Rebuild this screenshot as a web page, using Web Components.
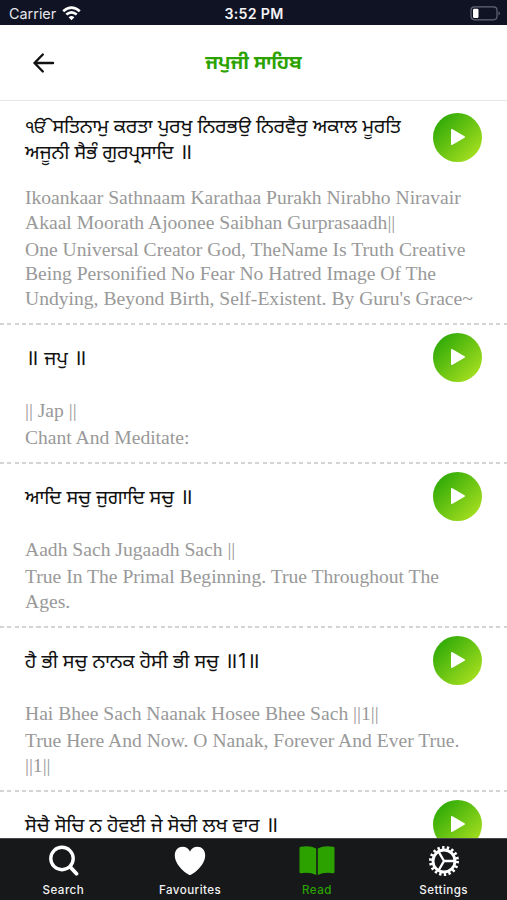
<!DOCTYPE html>
<html lang="pa">
<head>
<meta charset="utf-8">
<title>ਜਪੁਜੀ ਸਾਹਿਬ</title>
<style>
  html, body {
    margin: 0;
    height: 100%;
    overflow: hidden;
    background: #fff;
  }
</style>
</head>
<body>
<read-screen></read-screen>
<script>
const icons = {
  search: `<svg width="32" height="32" viewBox="0 0 32 32" fill="none" stroke="#fff"><circle cx="15" cy="13.500" r="11.200" stroke-width="3.400"/><path d="M23.500 22.200l6 6.500" stroke-width="3.800" stroke-linecap="round"/></svg>`,
  heart: `<svg width="32" height="32" viewBox="0 0 32 32"><path fill="#fff" d="M16 30C13.500 30 .8 20.500 .8 10.500C.8 5 4.300 1.800 8.600 1.800C12 1.800 14.500 3.600 16 6.400C17.500 3.600 20 1.800 23.400 1.800C27.700 1.800 31.200 5 31.200 10.500C31.200 20.500 18.500 30 16 30Z"/></svg>`,
  book: `<svg width="36" height="32" viewBox="0 0 36 32"><path fill="#2ba200" d="M.5 3.200Q.5 2 1.700 1.800Q11 .2 17.200 3.500V30Q10.500 26.600 2 28.200Q.5 28.400 .5 27ZM18.800 3.500Q25 .2 34.300 1.800Q35.500 2 35.500 3.200V27Q35.500 28.400 34 28.200Q25.500 26.600 18.800 30Z"/></svg>`,
  gear: `<svg width="32" height="32" viewBox="0 0 32 32" fill="none" stroke="#fff"><circle cx="16" cy="16" r="13.400" stroke-width="3.200" stroke-dasharray="2.400 2.278"/><circle cx="16" cy="16" r="11" stroke-width="2.800"/><path d="M16 16H27M16 16L10.500 6.500M16 16L10.500 25.500" stroke-width="2.400"/></svg>`
}

class StatusBar extends HTMLElement {
  constructor() {
    super()
    this._shadowRoot = this.attachShadow({mode: 'open'})
  }
  connectedCallback() {
    this._shadowRoot.innerHTML = `
      <style>
        :host {
          display: grid;
          grid-template-columns: 1fr auto 1fr;
          align-items: center;
          height: 25px;
          padding: 2px 6px 0 9px;
          box-sizing: border-box;
          background: #101324;
          color: #e4e5ea;
          font: 14.4px/20px Inter, sans-serif;
        }
        .left { display: flex; align-items: center; gap: 6px; }
        .time { font-weight: 600; color: #f4f4f7; font-size: 14.2px; letter-spacing: .3px; margin-right: 2px; }
        .battery { justify-self: end; }
        svg { display: block; }
      </style>
      <div class="left">
        <span>Carrier</span>
        <svg width="19" height="15" viewBox="0 0 19 15" fill="none" stroke="#fff" stroke-width="2.600"><path d="M1.200 5.300Q9.500-2 17.800 5.300M4.300 8.600Q9.500 4.200 14.700 8.600"/><path d="M9.500 14.200L6.600 11.200Q9.500 8.800 12.400 11.200Z" fill="#fff" stroke="none"/></svg>
      </div>
      <span class="time">3:52 PM</span>
      <svg class="battery" width="31" height="15" viewBox="0 0 31 15"><rect x="1" y=".8" width="26" height="13" rx="3.500" fill="none" stroke="#656775" stroke-width="1.200"/><rect x="3" y="2.700" width="5.500" height="9.300" rx="1.200" fill="#fff"/><path d="M28.500 5.200Q31.300 7.300 28.500 9.500Z" fill="#656775"/></svg>
    `
  }
}
window.customElements.define('status-bar', StatusBar)

class ScreenHeader extends HTMLElement {
  constructor() {
    super()
    this._shadowRoot = this.attachShadow({mode: 'open'})
  }
  connectedCallback() {
    this._shadowRoot.innerHTML = `
      <style>
        :host {
          display: grid;
          grid-template-columns: 1fr auto 1fr;
          align-items: center;
          height: 76px;
          padding: 0 32px;
          box-sizing: border-box;
          border-bottom: 1px solid #e6e6e6;
          font: 700 19.4px/26px "Noto Sans Gurmukhi", "Noto Sans", sans-serif;
          color: #2ba200;
        }
        svg { display: block; }
        .title { padding-top: 4px; }
      </style>
      <svg width="23" height="22" viewBox="0 0 23 22" fill="none" stroke="#111" stroke-width="2.400" stroke-linecap="round" stroke-linejoin="round"><path d="M21 11H2.500M10.800 2.500L2.500 11L10.800 19.500"/></svg>
      <div class="title"><slot></slot></div>
    `
  }
}
window.customElements.define('screen-header', ScreenHeader)

class PlayButton extends HTMLElement {
  constructor() {
    super()
    this._shadowRoot = this.attachShadow({mode: 'open'})
  }
  connectedCallback() {
    this._shadowRoot.innerHTML = `
      <style>
        :host {
          display: flex;
          align-items: center;
          justify-content: center;
          width: 49px;
          height: 49px;
          border-radius: 50%;
          background: linear-gradient(135deg, #34ac08 15%, #a8e020 90%);
        }
      </style>
      <svg width="16" height="18" viewBox="0 0 16 18"><path d="M2 2L14 9L2 16Z" fill="#fff" stroke="#fff" stroke-width="2" stroke-linejoin="round"/></svg>
    `
  }
}
window.customElements.define('play-button', PlayButton)

class VerseRow extends HTMLElement {
  constructor() {
    super()
    this._shadowRoot = this.attachShadow({mode: 'open'})
  }
  connectedCallback() {
    this._shadowRoot.innerHTML = `
      <style>
        :host {
          display: block;
          height: var(--row-height);
          padding: 9.5px 25px 0;
          box-sizing: border-box;
        }
        .top {
          display: flex;
          justify-content: space-between;
          height: var(--top-height, 49px);
        }
        .gurmukhi {
          padding-top: var(--text-top, 15px);
          font: 19.6px/24.5px "Noto Sans Gurmukhi", "Noto Sans", sans-serif;
          color: #111;
          white-space: nowrap;
        }
        .latin {
          margin-top: 17.5px;
          font: 19.6px/24.5px "Liberation Serif", serif;
          color: #999;
          white-space: nowrap;
        }
        .meaning { margin-top: 2.500px; }
      </style>
      <div class="top">
        <div class="gurmukhi"><slot name="gurmukhi"></slot></div>
        <play-button></play-button>
      </div>
      <div class="latin">
        <slot name="latin"></slot>
        <div class="meaning"><slot name="meaning"></slot></div>
      </div>
    `
  }
}
window.customElements.define('verse-row', VerseRow)

class TabItem extends HTMLElement {
  constructor() {
    super()
    this._shadowRoot = this.attachShadow({mode: 'open'})
  }
  connectedCallback() {
    this._shadowRoot.innerHTML = `
      <style>
        :host {
          flex: 1;
          display: flex;
          flex-direction: column;
          align-items: center;
          padding-top: 6px;
          gap: 5px;
          color: #f2f2f2;
          font: 500 11.6px/16px Inter, sans-serif;
          letter-spacing: .45px;
        }
        :host([active]) { color: #2ba200; }
        svg { display: block; }
      </style>
      ${icons[this.getAttribute('icon')]}
      <span><slot></slot></span>
    `
  }
}
window.customElements.define('tab-item', TabItem)

class TabBar extends HTMLElement {
  constructor() {
    super()
    this._shadowRoot = this.attachShadow({mode: 'open'})
  }
  connectedCallback() {
    this._shadowRoot.innerHTML = `
      <style>
        :host {
          display: flex;
          height: 62px;
          box-sizing: border-box;
          border-top: 1px solid #46474a;
          background: #17181a;
        }
      </style>
      <slot></slot>
    `
  }
}
window.customElements.define('tab-bar', TabBar)

class ReadScreen extends HTMLElement {
  constructor() {
    super()
    this._shadowRoot = this.attachShadow({mode: 'open'})
  }
  connectedCallback() {
    this._shadowRoot.innerHTML = `
      <style>
        :host {
          display: flex;
          flex-direction: column;
          width: 507px;
          height: 900px;
          overflow: hidden;
        }
        main { flex: 1; min-height: 0; overflow: hidden; }
        verse-row { --row-height: 139px; }
        verse-row.first {
          --row-height: 222px;
          --text-top: 3.5px;
          --top-height: 56px;
          padding-top: 11.5px;
        }
        verse-row.tall { --row-height: 164px; }
        verse-row + verse-row {
          background: repeating-linear-gradient(90deg, #d4d4d4 0 4px, transparent 4px 7.300px) 0 0 / 100% 2px no-repeat;
        }
        i, u { font-style: normal; text-decoration: none; line-height: 0; }
        i { font-size: 22px; margin: 0 .5px; }
        b { font-weight: 400; font-size: 18px; word-spacing: -4px; }
        u { font-family: Inter, sans-serif; }
      </style>
      <status-bar></status-bar>
      <screen-header>ਜਪੁਜੀ ਸਾਹਿਬ</screen-header>
      <main>
        <verse-row class="first">
          <span slot="gurmukhi"><b>ੴ </b>ਸਤਿਨਾਮੁ ਕਰਤਾ ਪੁਰਖੁ ਨਿਰਭਉ ਨਿਰਵੈਰੁ ਅਕਾਲ ਮੂਰਤਿ<br>ਅਜੂਨੀ ਸੈਭੰ ਗੁਰਪ੍ਰਸਾਦਿ <i>॥</i></span>
          <span slot="latin">Ikoankaar Sathnaam Karathaa Purakh Nirabho Niravair<br>Akaal Moorath Ajoonee Saibhan Gurprasaadh||</span>
          <span slot="meaning">One Universal Creator God, TheName Is Truth Creative<br>Being Personified No Fear No Hatred Image Of The<br>Undying, Beyond Birth, Self-Existent. By Guru's Grace~</span>
        </verse-row>
        <verse-row>
          <span slot="gurmukhi"><i>॥</i> ਜਪੁ <i>॥</i></span>
          <span slot="latin">|| Jap ||</span>
          <span slot="meaning">Chant And Meditate:</span>
        </verse-row>
        <verse-row class="tall">
          <span slot="gurmukhi">ਆਦਿ ਸਚੁ ਜੁਗਾਦਿ ਸਚੁ <i>॥</i></span>
          <span slot="latin">Aadh Sach Jugaadh Sach ||</span>
          <span slot="meaning">True In The Primal Beginning. True Throughout The<br>Ages.</span>
        </verse-row>
        <verse-row class="tall">
          <span slot="gurmukhi">ਹੈ ਭੀ ਸਚੁ ਨਾਨਕ ਹੋਸੀ ਭੀ ਸਚੁ <i>॥</i><u>1</u><i>॥</i></span>
          <span slot="latin">Hai Bhee Sach Naanak Hosee Bhee Sach ||1||</span>
          <span slot="meaning">True Here And Now. O Nanak, Forever And Ever True.<br>||1||</span>
        </verse-row>
        <verse-row>
          <span slot="gurmukhi">ਸੋਚੈ ਸੋਚਿ ਨ ਹੋਵਈ ਜੇ ਸੋਚੀ ਲਖ ਵਾਰ <i>॥</i></span>
        </verse-row>
      </main>
      <tab-bar>
        <tab-item icon="search">Search</tab-item>
        <tab-item icon="heart">Favourites</tab-item>
        <tab-item icon="book" active>Read</tab-item>
        <tab-item icon="gear">Settings</tab-item>
      </tab-bar>
    `
  }
}
window.customElements.define('read-screen', ReadScreen)
</script>
</body>
</html>
